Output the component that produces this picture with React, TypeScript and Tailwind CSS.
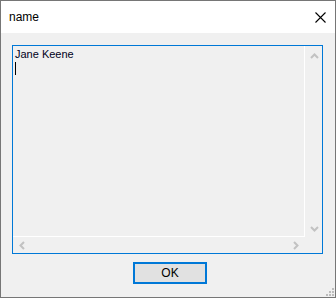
const chevron = {
  up: "M1 5 L4.5 1.5 L8 5",
  down: "M1 1 L4.5 4.5 L8 1",
  left: "M5 1 L1.5 4.5 L5 8",
  right: "M1 1 L4.5 4.5 L1 8",
};

function Arrow({ dir }: { dir: keyof typeof chevron }) {
  const horiz = dir === "left" || dir === "right";
  return (
    <svg
      width={horiz ? 6 : 9}
      height={horiz ? 9 : 6}
      viewBox={horiz ? "0 0 6 9" : "0 0 9 6"}
      className="block"
    >
      <path d={chevron[dir]} fill="none" stroke="#c2c2c2" strokeWidth="2" />
    </svg>
  );
}

function Grip() {
  // classic three-row dot grip
  const dots = [
    [6, 0],
    [3, 3],
    [6, 3],
    [0, 6],
    [3, 6],
    [6, 6],
  ];
  return (
    <svg width="8" height="8" viewBox="0 0 8 8" className="block">
      {dots.map(([x, y]) => (
        <rect key={`${x}-${y}`} x={x} y={y} width="2" height="2" fill="#bcbcbc" />
      ))}
    </svg>
  );
}

export default function App() {
  return (
    <div className="w-[336px] h-[298px] border border-[#767676] bg-white flex flex-col font-['Liberation_Sans',Arial,sans-serif] text-black">
      {/* ─── Title bar ─── */}
      <div className="h-[32px] flex items-center justify-between bg-white pl-[8px] pr-[9px]">
        <span className="text-[12px] leading-none">name</span>
        <svg width="11" height="11" viewBox="0 0 11 11" className="block mt-[1px]">
          <path d="M0.5 0.5 L10.5 10.5 M10.5 0.5 L0.5 10.5" stroke="#000" strokeWidth="1.1" />
        </svg>
      </div>

      {/* ─── Body ─── */}
      <div className="relative flex-1 bg-[#f0f0f0] pl-[11px] pt-[12px]">
        <div className="w-[311px] h-[209px] border border-[#0078d7] grid grid-cols-[292px_17px] grid-rows-[191px_16px]">
          <div className="border-r border-b border-white pl-[2px] pt-[2px] text-[11px] leading-[13px] text-[#000020]">
            <div>Jane Keene</div>
            <div className="w-px h-[13px] bg-black mt-[1px]" />
          </div>
          <div className="flex flex-col items-center justify-between pl-[1px] pt-[7px] pb-[5px]">
            <Arrow dir="up" />
            <Arrow dir="down" />
          </div>
          <div className="flex items-center justify-between pl-[6px] pr-[6px]">
            <Arrow dir="left" />
            <Arrow dir="right" />
          </div>
          <div />
        </div>

        <button className="mt-[8px] ml-[121px] w-[74px] h-[22px] border-2 border-[#0078d7] bg-[#e1e1e1] text-[12px] leading-none flex items-center justify-center">
          OK
        </button>

        <div className="absolute right-[1px] bottom-[1px]">
          <Grip />
        </div>
      </div>
    </div>
  );
}
